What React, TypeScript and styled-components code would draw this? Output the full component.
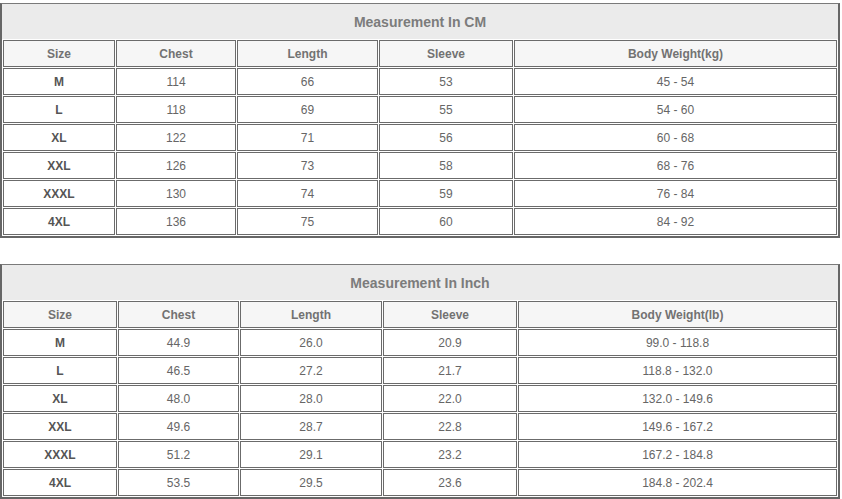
import styled, { createGlobalStyle } from 'styled-components';

const GlobalStyle = createGlobalStyle`
  * { box-sizing: border-box; }
  body {
    margin: 0;
    background: #ffffff;
    font-family: "Liberation Sans", Arial, sans-serif;
  }
`;

const Page = styled.div`
  display: flex;
  flex-direction: column;
  gap: 26px;
  width: 840px;
  padding-top: 3px;
`;

const Frame = styled.section`
  display: flex;
  flex-direction: column;
  border-top: 1px solid #7a7a7a;
  border-left: 2px solid #666666;
  border-right: 2px solid #666666;
  border-bottom: 2px solid #666666;
`;

const Title = styled.div`
  height: 35px;
  display: flex;
  align-items: center;
  justify-content: center;
  background-color: #ebebeb;
  color: #7c7c7c;
  font-size: 14px;
  font-weight: bold;
`;

const Table = styled.table`
  border-collapse: separate;
  border-spacing: 1px;
  table-layout: fixed;
  width: 100%;
`;

const HeadCell = styled.th<{ $w: number }>`
  width: ${(p) => p.$w}px;
  height: 27px;
  padding: 0;
  border: 1px solid #6b6b6b;
  background-color: #f6f6f6;
  color: #727272;
  font-size: 12px;
  font-weight: bold;
  text-align: center;
`;

const Cell = styled.td<{ $bold?: boolean }>`
  height: 27px;
  padding: 0;
  border: 1px solid #6b6b6b;
  background-color: #ffffff;
  color: ${(p) => (p.$bold ? '#555555' : '#666666')};
  font-size: 12px;
  font-weight: ${(p) => (p.$bold ? 'bold' : 'normal')};
  text-align: center;
`;

type SizeTable = {
  title: string;
  weightUnit: string;
  widths: number[];
  rows: string[][];
};

const tables: SizeTable[] = [
  {
    title: 'Measurement In CM',
    weightUnit: 'kg',
    widths: [112, 120, 141, 134, 323],
    rows: [
      ['M', '114', '66', '53', '45 - 54'],
      ['L', '118', '69', '55', '54 - 60'],
      ['XL', '122', '71', '56', '60 - 68'],
      ['XXL', '126', '73', '58', '68 - 76'],
      ['XXXL', '130', '74', '59', '76 - 84'],
      ['4XL', '136', '75', '60', '84 - 92'],
    ],
  },
  {
    title: 'Measurement In Inch',
    weightUnit: 'lb',
    widths: [114, 121, 142, 134, 319],
    rows: [
      ['M', '44.9', '26.0', '20.9', '99.0 - 118.8'],
      ['L', '46.5', '27.2', '21.7', '118.8 - 132.0'],
      ['XL', '48.0', '28.0', '22.0', '132.0 - 149.6'],
      ['XXL', '49.6', '28.7', '22.8', '149.6 - 167.2'],
      ['XXXL', '51.2', '29.1', '23.2', '167.2 - 184.8'],
      ['4XL', '53.5', '29.5', '23.6', '184.8 - 202.4'],
    ],
  },
];

function MeasurementTable({ title, weightUnit, widths, rows }: SizeTable) {
  const headers = ['Size', 'Chest', 'Length', 'Sleeve', `Body Weight(${weightUnit})`];

  return (
    <Frame>
      <Title>{title}</Title>
      <Table>
        <thead>
          <tr>
            {headers.map((h, i) => (
              <HeadCell key={h} $w={widths[i]}>
                {h}
              </HeadCell>
            ))}
          </tr>
        </thead>
        <tbody>
          {rows.map((row) => (
            <tr key={row[0]}>
              {row.map((value, i) => (
                <Cell key={i} $bold={i === 0}>
                  {value}
                </Cell>
              ))}
            </tr>
          ))}
        </tbody>
      </Table>
    </Frame>
  );
}

export default function App() {
  return (
    <>
      <GlobalStyle />
      <Page>
        {tables.map((t) => (
          <MeasurementTable key={t.title} {...t} />
        ))}
      </Page>
    </>
  );
}
